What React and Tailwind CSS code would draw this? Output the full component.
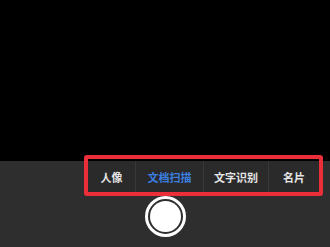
import React from "react";

const tabs = [
  { label: "人像", w: "w-[47px]" },
  { label: "文档扫描", w: "w-[68px]", active: true },
  { label: "文字识别", w: "w-[65px]" },
  { label: "名片", w: "w-[51px]" },
];

export default function App() {
  return (
    <div
      className="relative w-[330px] h-[247px] bg-[#2e2e2e] overflow-hidden"
      style={{ fontFamily: '"Noto Sans CJK SC", "Noto Sans", sans-serif' }}
    >
      {/* camera preview */}
      <div className="h-[161px] bg-black" />

      {/* mode tabs */}
      <div className="flex h-[32px] ml-[88px] w-[231px] bg-[#2a2a2a]">
        {tabs.map((t, i) => (
          <div
            key={t.label}
            className={`${t.w} flex items-center justify-center text-[11px] font-semibold ${
              i > 0 ? "border-l border-[#383838]" : ""
            } ${t.active ? "text-[#3b7fe0]" : "text-[#e4e4e4]"}`}
          >
            {t.label}
          </div>
        ))}
      </div>

      {/* shutter */}
      <div className="mt-[3px] flex justify-center">
        <div className="w-[41px] h-[41px] rounded-full border-[3px] border-white flex items-center justify-center">
          <div className="w-[31px] h-[31px] rounded-full bg-white" />
        </div>
      </div>

      {/* red highlight box */}
      <div className="absolute left-[84px] top-[155px] w-[239px] h-[41px] border-[4px] border-[#ea2f3a] rounded-[3px]" />
    </div>
  );
}
